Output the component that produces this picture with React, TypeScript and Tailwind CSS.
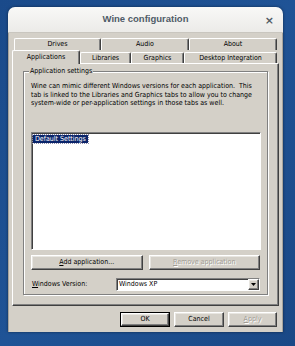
import React from "react";

const raised = "border border-t-white border-l-white border-b-[#404040] border-r-[#404040] shadow-[inset_-1px_-1px_0_#808080,inset_1px_1px_0_#e8e6e1]";
const sunken = "border border-t-[#808080] border-l-[#808080] border-b-white border-r-white shadow-[inset_1px_1px_0_#404040]";

function Tab({ label, w, selected, h }: { label: string; w: number; selected?: boolean; h: number }) {
  return (
    <div
      style={{ width: w, height: h }}
      className={
        "flex items-center justify-center bg-[#d4d0c8] border-t border-l border-r border-t-white border-l-white border-r-[#404040] rounded-t-[2px] shadow-[inset_-1px_0_0_#808080] " +
        (selected ? "-mb-[1px] relative z-10 font-medium" : "")
      }
    >
      <span className="leading-none">{label}</span>
    </div>
  );
}

export default function App() {
  return (
    <div
      className="w-[295px] h-[346px] pt-[7px] pl-[8px] overflow-hidden bg-gradient-to-br from-[#1a4a8a] via-[#1f5396] to-[#1a4886]"
      style={{ fontFamily: '"DejaVu Sans Condensed", "Liberation Sans", Arial, sans-serif' }}
    >
      <div className="w-[275px] h-[325px] rounded-t-[7px] overflow-hidden flex flex-col shadow-[0_0_3px_rgba(0,0,0,0.5)]">
        {/* title bar */}
        <div className="h-[26px] relative flex items-center justify-center bg-gradient-to-b from-[#f8f8f7] to-[#ecebe8] border-b border-[#c9c6bf]">
          <span
            className="text-[9.5px] font-bold text-[#4f5b67]"
            style={{ fontFamily: '"Liberation Sans", Arial, sans-serif' }}
          >
            Wine configuration
          </span>
          <span className="absolute right-[9px] top-[6px] text-[11px] font-bold text-[#505a64]" style={{ fontFamily: '"DejaVu Sans", sans-serif' }}>
            ×
          </span>
        </div>
        {/* body */}
        <div className="flex-1 bg-[#d4d0c8] flex flex-col text-[7px] text-black border-l border-r border-[#a8a49c]">
          {/* tabs */}
          <div className="pt-[5px] pl-[3px] flex flex-col">
            <div className="flex pl-[2px]">
              <Tab label="Drives" w={87} h={12} />
              <Tab label="Audio" w={88} h={12} />
              <Tab label="About" w={88} h={12} />
            </div>
            <div className="flex items-end h-[13px]">
              <Tab label="Applications" w={68} h={14} selected />
              <Tab label="Libraries" w={51} h={11} />
              <Tab label="Graphics" w={53} h={11} />
              <Tab label="Desktop Integration" w={93} h={11} />
            </div>
          </div>
          {/* panel */}
          <div className="ml-[3px] w-[267px] h-[243px] border border-t-white border-l-white border-b-[#404040] border-r-[#404040] shadow-[inset_-1px_-1px_0_#808080] pt-[7px] px-[10px]">
            <div className="relative h-[224px] border border-[#808080] shadow-[inset_1px_1px_0_#fff,1px_1px_0_#fff] px-[7px] pt-[10px]">
              <span className="absolute -top-[5px] left-[5px] bg-[#d4d0c8] px-[1px] leading-[9px]">Application settings</span>
              <p className="leading-[8.5px] whitespace-nowrap">
                Wine can mimic different Windows versions for each application.&nbsp; This
                <br />
                tab is linked to the Libraries and Graphics tabs to allow you to change
                <br />
                system-wide or per-application settings in those tabs as well.
              </p>
              <div className={"mt-[24px] h-[118px] w-[230px] bg-white " + sunken + " p-[1px]"}>
                <div className="inline-block bg-[#0a246a] text-white px-[2px] leading-[8px] outline outline-1 outline-dotted outline-[#8a8aa8]">
                  Default Settings
                </div>
              </div>
              <div className="flex gap-[6px] mt-[5px]">
                <div className={"w-[112px] h-[15px] flex items-center justify-center " + raised}>
                  <span><u>A</u>dd application...</span>
                </div>
                <div className={"w-[112px] h-[15px] flex items-center justify-center text-[#a09c94] [text-shadow:1px_1px_0_#fff] " + raised}>
                  <span><u>R</u>emove application</span>
                </div>
              </div>
              <div className="flex items-center mt-[8px]">
                <span className="w-[85px] pl-[1px]"><u>W</u>indows Version:</span>
                <div className={"w-[144px] h-[13px] bg-white flex items-center justify-between " + sunken}>
                  <span className="pl-[2px]">Windows XP</span>
                  <div className={"w-[11px] h-[11px] flex items-center justify-center bg-[#d4d0c8] " + raised}>
                    <svg width="5" height="3" viewBox="0 0 5 3"><path d="M0 0h5L2.5 3z" fill="#000" /></svg>
                  </div>
                </div>
              </div>
            </div>
          </div>
          {/* bottom buttons */}
          <div className="flex justify-end gap-[4px] pr-[5px] mt-[6px]">
            <div className="w-[50px] h-[15px] border border-black">
              <div className={"w-full h-full flex items-center justify-center " + raised}>OK</div>
            </div>
            <div className={"w-[50px] h-[15px] flex items-center justify-center " + raised}>Cancel</div>
            <div className={"w-[49px] h-[15px] flex items-center justify-center text-[#a09c94] [text-shadow:1px_1px_0_#fff] " + raised}>
              <span><u>A</u>pply</span>
            </div>
          </div>
        </div>
      </div>
    </div>
  );
}
